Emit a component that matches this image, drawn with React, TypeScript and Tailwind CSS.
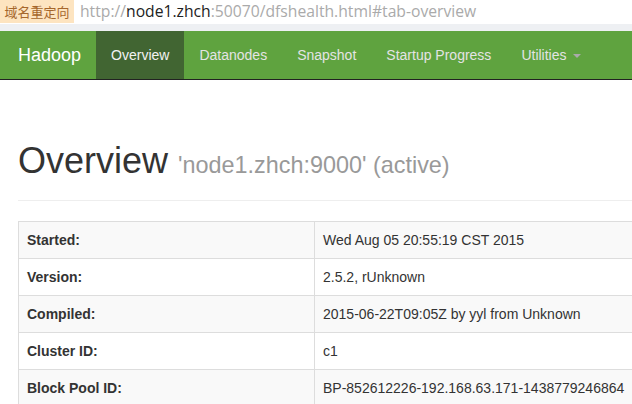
export default function App() {
  const rows: [string, string][] = [
    ['Started:', 'Wed Aug 05 20:55:19 CST 2015'],
    ['Version:', '2.5.2, rUnknown'],
    ['Compiled:', '2015-06-22T09:05Z by yyl from Unknown'],
    ['Cluster ID:', 'c1'],
    ['Block Pool ID:', 'BP-852612226-192.168.63.171-1438779246864'],
  ]

  return (
    <div className="h-[404px] w-[632px] overflow-hidden bg-white font-['Liberation_Sans',Arial,sans-serif] text-[#333]">
      {/* address bar */}
      <div className="flex h-6 items-start bg-white">
        <div className="flex h-[23px] w-[74px] items-center justify-center bg-[#fde4c0] font-['Noto_Sans_CJK_SC',sans-serif] text-[13px] text-[#a5662b]">
          域名重定向
        </div>
        <div className="ml-[6px] flex h-[23px] items-center font-['Open_Sans','Noto_Sans',sans-serif] text-[15.7px] text-[#aaa]">
          http://<span className="text-[#222]">node1.zhch</span>:50070/dfshealth.html#tab-overview
        </div>
      </div>
      <div className="h-[7px] bg-[#eef0f3]" />

      {/* navbar */}
      <nav className="flex h-[49px] items-stretch border-b border-[#222] bg-[#5fa33f] text-[14px]">
        <a className="flex items-center pl-[18px] pr-[15px] text-[18px] text-white">Hadoop</a>
        <a className="flex items-center bg-[#416532] px-[15px] text-[#f2f2f2]">Overview</a>
        <a className="flex items-center px-[15px] text-[#e4e4e4]">Datanodes</a>
        <a className="flex items-center px-[15px] text-[#e4e4e4]">Snapshot</a>
        <a className="flex items-center px-[15px] text-[#e4e4e4]">Startup Progress</a>
        <a className="flex items-center px-[15px] text-[#e4e4e4]">
          Utilities
          <span className="ml-[6px] mt-[2px] h-0 w-0 border-x-4 border-t-4 border-x-transparent border-t-[#aaa]" />
        </a>
      </nav>

      {/* content */}
      <div className="pl-[18px]">
        <div className="mb-5 mt-[61px] border-b border-[#eee] pb-[19px]">
          <h1 className="text-[36px] leading-[1.1] text-[#333]">
            Overview <small className="text-[23.4px] text-[#999]">'node1.zhch:9000' (active)</small>
          </h1>
        </div>

        <table className="w-[680px] border-collapse border border-[#ddd] text-[14px] leading-5">
          <tbody>
            {rows.map(([k, v], i) => (
              <tr key={k} className={i % 2 === 0 ? 'bg-[#f9f9f9]' : 'bg-white'}>
                <th className="w-[296px] border border-[#ddd] p-2 text-left font-bold">{k}</th>
                <td className="border border-[#ddd] p-2">{v}</td>
              </tr>
            ))}
          </tbody>
        </table>
      </div>
    </div>
  )
}
